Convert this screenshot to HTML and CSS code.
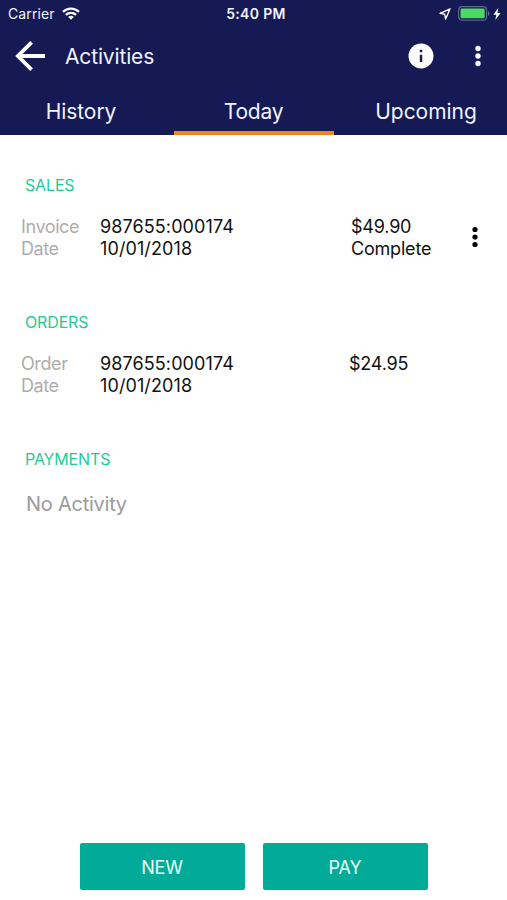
FILE: index.html
```html
<!DOCTYPE html>
<html lang="en">
<head>
<meta charset="utf-8">
<title>Activities</title>
<link rel="stylesheet" href="styles.css">
</head>
<body>
<header class="header">
  <div class="status">
    <div class="status-left"><span class="carrier">Carrier</span>
      <svg width="18" height="13" viewBox="0 0 18 13" fill="none" stroke="#fff" stroke-width="2.3"><path d="M1 4.9C5.5.6 12.5.6 17 4.9M3.9 7.9c2.9-2.7 7.3-2.7 10.2 0"/><path d="M9 12.7 6.2 9.9c1.6-1.5 4-1.5 5.6 0z" fill="#fff" stroke="none"/></svg>
    </div>
    <span class="clock">5:40 PM</span>
    <div class="status-right">
      <svg class="location" width="12" height="12" viewBox="0 0 12 12" fill="none" stroke="#fff" stroke-width="1.4" stroke-linejoin="round"><path d="M11 1 1 5.3l4.7.9.9 4.8z"/></svg>
      <svg class="battery" width="32" height="15" viewBox="0 0 32 15"><rect x=".6" y=".6" width="28" height="13.6" rx="3.5" fill="none" stroke="#62658c" stroke-width="1.2"/><rect x="2.5" y="2.5" width="24.2" height="9.8" rx="1.2" fill="#4cd964"/><path d="M30 5c2 .7 2 4.2 0 4.9z" fill="#62658c"/></svg>
      <svg class="bolt" width="8" height="12" viewBox="0 0 8 12" fill="#fff"><path d="M5.2 0 .4 6.8h3L2.2 12 7.6 4.9H4.5z"/></svg>
    </div>
  </div>
  <div class="appbar">
    <svg width="32" height="32" viewBox="0 0 32 32" fill="none" stroke="#fff" stroke-width="3.8"><path d="M31 16H4M17.6 2.3 3.9 16l13.7 13.7"/></svg>
    <h1 class="title">Activities</h1>
    <svg class="info" width="26" height="26" viewBox="0 0 26 26"><circle cx="13" cy="13" r="12.5" fill="#fff"/><path d="M11.8 6.8h2.4v2.4h-2.4zM11.8 11.8h2.4v7.3h-2.4z" fill="#151a55"/></svg>
    <svg class="more" width="6" height="22" viewBox="0 0 6 22" fill="#fff"><circle cx="3" cy="3.5" r="2.7"/><circle cx="3" cy="11" r="2.7"/><circle cx="3" cy="18.5" r="2.7"/></svg>
  </div>
  <nav class="tabs">
    <a class="tab history">History</a>
    <a class="tab active">Today</a>
    <a class="tab">Upcoming</a>
  </nav>
</header>
<main class="content">
  <section class="section">
    <h2 class="heading">SALES</h2>
    <div class="entry">
      <div class="labels"><div>Invoice</div><div>Date</div></div>
      <div class="values"><div>987655:000174</div><div>10/01/2018</div></div>
      <div class="amount"><div>$49.90</div><div>Complete</div></div>
      <svg class="row-more" width="6" height="22" viewBox="0 0 6 22" fill="#000"><circle cx="3" cy="3.5" r="2.6"/><circle cx="3" cy="11" r="2.6"/><circle cx="3" cy="18.5" r="2.6"/></svg>
    </div>
  </section>
  <section class="section">
    <h2 class="heading">ORDERS</h2>
    <div class="entry order">
      <div class="labels"><div>Order</div><div>Date</div></div>
      <div class="values"><div>987655:000174</div><div>10/01/2018</div></div>
      <div class="amount"><div>$24.95</div></div>
    </div>
  </section>
  <section class="section">
    <h2 class="heading">PAYMENTS</h2>
    <p class="empty">No Activity</p>
  </section>
</main>
<footer class="actions">
  <button class="button">NEW</button>
  <button class="button">PAY</button>
</footer>
</body>
</html>
```
FILE: styles.css
```css
* { box-sizing: border-box; }
body {
  margin: 0;
  height: 900px;
  display: flex;
  flex-direction: column;
  background: #fff;
  color: #111;
  font-family: Inter, "Liberation Sans", sans-serif;
}
svg { display: block; flex: none; }
h1, h2, p { margin: 0; font-weight: 400; }
.header { height: 135px; background: #151a55; color: #f1f3ff; }
.status {
  height: 27px;
  display: grid;
  grid-template-columns: 1fr auto 1fr;
  align-items: center;
  padding: 0 6px 0 8px;
}
.status-left { display: flex; align-items: center; gap: 7px; }
.carrier { font-size: 14px; letter-spacing: 0.1px; }
.clock { margin-left: 3px; font-size: 14px; font-weight: 600; letter-spacing: 0.35px; }
.status-right { display: flex; align-items: center; justify-content: flex-end; }
.battery { margin-left: 7px; }
.bolt { margin-left: 3px; }
.appbar { height: 58px; display: flex; align-items: center; padding: 0 26px 0 14px; }
.title { flex: 1; margin-left: 19px; font-size: 21px; letter-spacing: -0.15px; }
.info { margin-right: 41px; }
.tabs { height: 50px; display: grid; grid-template-columns: repeat(3, 160px); justify-content: space-between; padding: 0 1px; }
.tab { display: flex; align-items: center; justify-content: center; padding-top: 6px; border-bottom: 4px solid transparent; font-size: 21px; letter-spacing: -0.05px; }
.active { border-color: #f28518; letter-spacing: -0.25px; }
.content { flex: 1; padding-top: 40px; }
.section { height: 137px; }
.heading { margin-left: 25px; font-size: 16px; line-height: 20px; letter-spacing: -0.15px; color: #1fcb96; }
.entry { display: grid; grid-template-columns: 79px 251px 121px 6px; align-items: start; margin: 21px 0 0 21px; font-size: 18px; line-height: 22px; }
.labels { color: #adadad; letter-spacing: -0.4px; }
.values { letter-spacing: 0.1px; }
.amount { letter-spacing: -0.2px; }
.row-more { align-self: center; margin-top: -2px; }
.order .amount { margin-left: -2px; }
.empty { margin: 23px 0 0 26px; font-size: 20px; line-height: 24px; letter-spacing: -0.25px; color: #9b9b9b; }
.actions { display: flex; justify-content: center; gap: 18px; padding: 0 0 10px; }
.button { width: 165px; height: 47px; padding: 2px 0 0; border: 0; border-radius: 2px; background: #02ab98; color: #e8fffb; font: 18px Inter, "Liberation Sans", sans-serif; letter-spacing: -0.2px; }
```
